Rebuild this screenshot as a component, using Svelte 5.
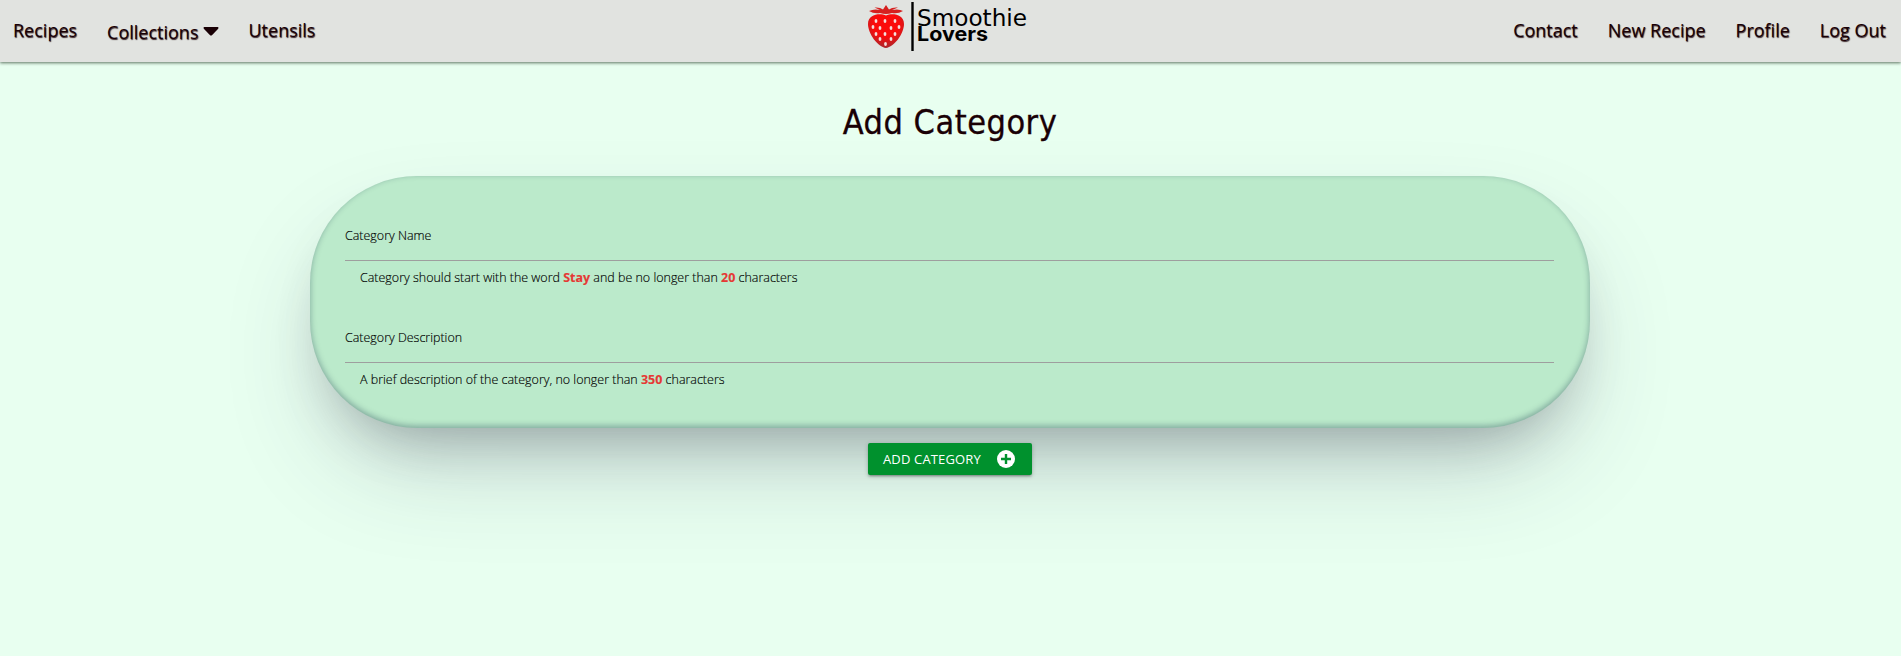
<script>
  const left = [
    { label: 'Recipes' },
    { label: 'Collections', menu: true },
    { label: 'Utensils' }
  ];
  const right = ['Contact', 'New Recipe', 'Profile', 'Log Out'];
  const seeds = [
    [8, 19], [17, 19], [27, 19], [5, 25], [12, 26], [23, 26], [31, 25],
    [8, 32], [17, 32], [27, 32], [12, 37], [23, 37], [17.5, 42]
  ];
</script>

<div class="page">
  <nav>
    <ul>
      {#each left as item}
        <li class:menu={item.menu}>
          <a href="#top">{item.label}{#if item.menu}<svg class="caret" width="16" height="9" viewBox="0 0 16 9"><path d="M1.2 0H14.8Q16 .4 15.2 1.7L9.2 8Q8 9 6.8 8L.8 1.7Q0 .4 1.2 0Z" fill="#190005" /></svg>{/if}</a>
        </li>
      {/each}
    </ul>
    <svg class="logo" width="164" height="52" viewBox="0 0 164 52">
      <defs>
        <radialGradient id="berry" cx=".5" cy=".3" r=".72">
          <stop offset=".5" stop-color="#fb0b0b" />
          <stop offset="1" stop-color="#a52a2f" />
        </radialGradient>
      </defs>
      <path d="M18 15.5C24 13 36 14 36 24C36 34 26 47 18 48C10 47 0 34 0 24C0 14 12 13 18 15.5Z" fill="url(#berry)" />
      <path d="M1 11Q6 8.5 12 10L6.5 7.5Q12 7 15 9.5L18 5L21 9.5Q24 7 30 7.5L24 10Q31 8.5 35 11Q30 14 24 13Q18 15 12 13Q6 14 1 11Z" fill="#d6201f" />
      {#each seeds as [x, y]}
        <ellipse cx={x} cy={y + 2} rx="1.4" ry="1.9" fill="#f4dfdc" />
      {/each}
      <path d="M44.5 2V51" stroke="#000" stroke-width="2.4" />
      <text class="brand" x="49" y="25.5" textLength="110" lengthAdjust="spacingAndGlyphs">Smoothie</text>
      <text class="brand strong" x="49" y="41" textLength="71" lengthAdjust="spacingAndGlyphs">Lovers</text>
    </svg>
    <ul>
      {#each right as label}
        <li><a href="#top">{label}</a></li>
      {/each}
    </ul>
  </nav>

  <main>
    <h1>Add Category</h1>
    <form>
      <div class="field">
        <div class="input">Category Name</div>
        <p>Category should start with the word <b>Stay</b> and be no longer than <b>20</b> characters</p>
      </div>
      <div class="field">
        <div class="input">Category Description</div>
        <p>A brief description of the category, no longer than <b>350</b> characters</p>
      </div>
    </form>
    <button type="button">
      <span>ADD CATEGORY</span>
      <svg width="18" height="18" viewBox="0 0 18 18"><circle cx="9" cy="9" r="9" fill="#fff" /><path d="M9 4V14M4 9H14" stroke="#00912d" stroke-width="2.4" /></svg>
    </button>
  </main>
</div>

<style>
  :global(body) {
    margin: 0;
    background: #e8fff0;
  }
  .page {
    min-height: 656px;
    overflow: hidden;
    background: #e8fff0;
    color: #190005;
    font-family: 'Open Sans', sans-serif;
  }
  nav {
    display: grid;
    grid-template-columns: 868px 164px 1fr;
    height: 62px;
    background: #e1e3e0;
    box-shadow: 0 1px 3px rgba(0, 20, 0, 0.6);
  }
  ul {
    display: flex;
    gap: 30px;
    list-style: none;
    margin: 0;
    padding: 0 15px 0 13px;
    font-size: 18px;
    line-height: 60px;
  }
  ul:last-child {
    justify-content: flex-end;
  }
  a {
    color: inherit;
    text-decoration: none;
    text-shadow: 0.5px 0.5px 1px rgba(25, 0, 5, 0.85);
  }
  .menu {
    padding-top: 2px;
    margin-right: -1px;
  }
  .caret {
    margin: 0 0 3px 5px;
  }
  .brand {
    font: 23px 'DejaVu Sans Condensed', 'DejaVu Sans', sans-serif;
    fill: #000;
  }
  .strong {
    font: 700 20px Inter, sans-serif;
  }
  main {
    display: flex;
    flex-direction: column;
    align-items: center;
    width: 1900px;
  }
  h1 {
    margin: 36px 0 30px;
    font: 400 34px/48px 'DejaVu Sans Condensed', 'DejaVu Sans', sans-serif;
    letter-spacing: 0.5px;
    -webkit-text-stroke: 0.3px #190005;
  }
  form {
    box-sizing: border-box;
    width: 1280px;
    height: 252px;
    padding: 39px 36px 0 35px;
    border-radius: 107px;
    background: #bbeacb;
    box-shadow: rgba(50, 50, 93, 0.25) 0 50px 100px -20px, rgba(0, 0, 0, 0.3) 0 30px 60px -30px, rgba(10, 37, 64, 0.35) 0 -2px 6px 0 inset;
    color: #000;
    font-size: 12.47px;
    font-weight: 300;
    -webkit-text-stroke: 0.15px currentColor;
  }
  .field {
    height: 102px;
  }
  .input {
    height: 45px;
    border-bottom: 1px solid #9e9e9e;
    line-height: 42px;
  }
  p {
    margin: 0;
    padding: 8px 15px 0;
    line-height: 18px;
  }
  b {
    color: #e53935;
    font-weight: 700;
  }
  button {
    display: flex;
    align-items: center;
    justify-content: space-between;
    width: 164px;
    height: 32px;
    margin-top: 15px;
    padding: 0 17px 0 15px;
    border: 0;
    border-radius: 2px;
    background: #00912d;
    color: #fff;
    font: 13px 'Open Sans', sans-serif;
    letter-spacing: 0.15px;
    box-shadow: 0 2px 2px rgba(0, 0, 0, 0.14), 0 3px 1px -2px rgba(0, 0, 0, 0.12), 0 1px 5px rgba(0, 0, 0, 0.2);
  }
</style>
